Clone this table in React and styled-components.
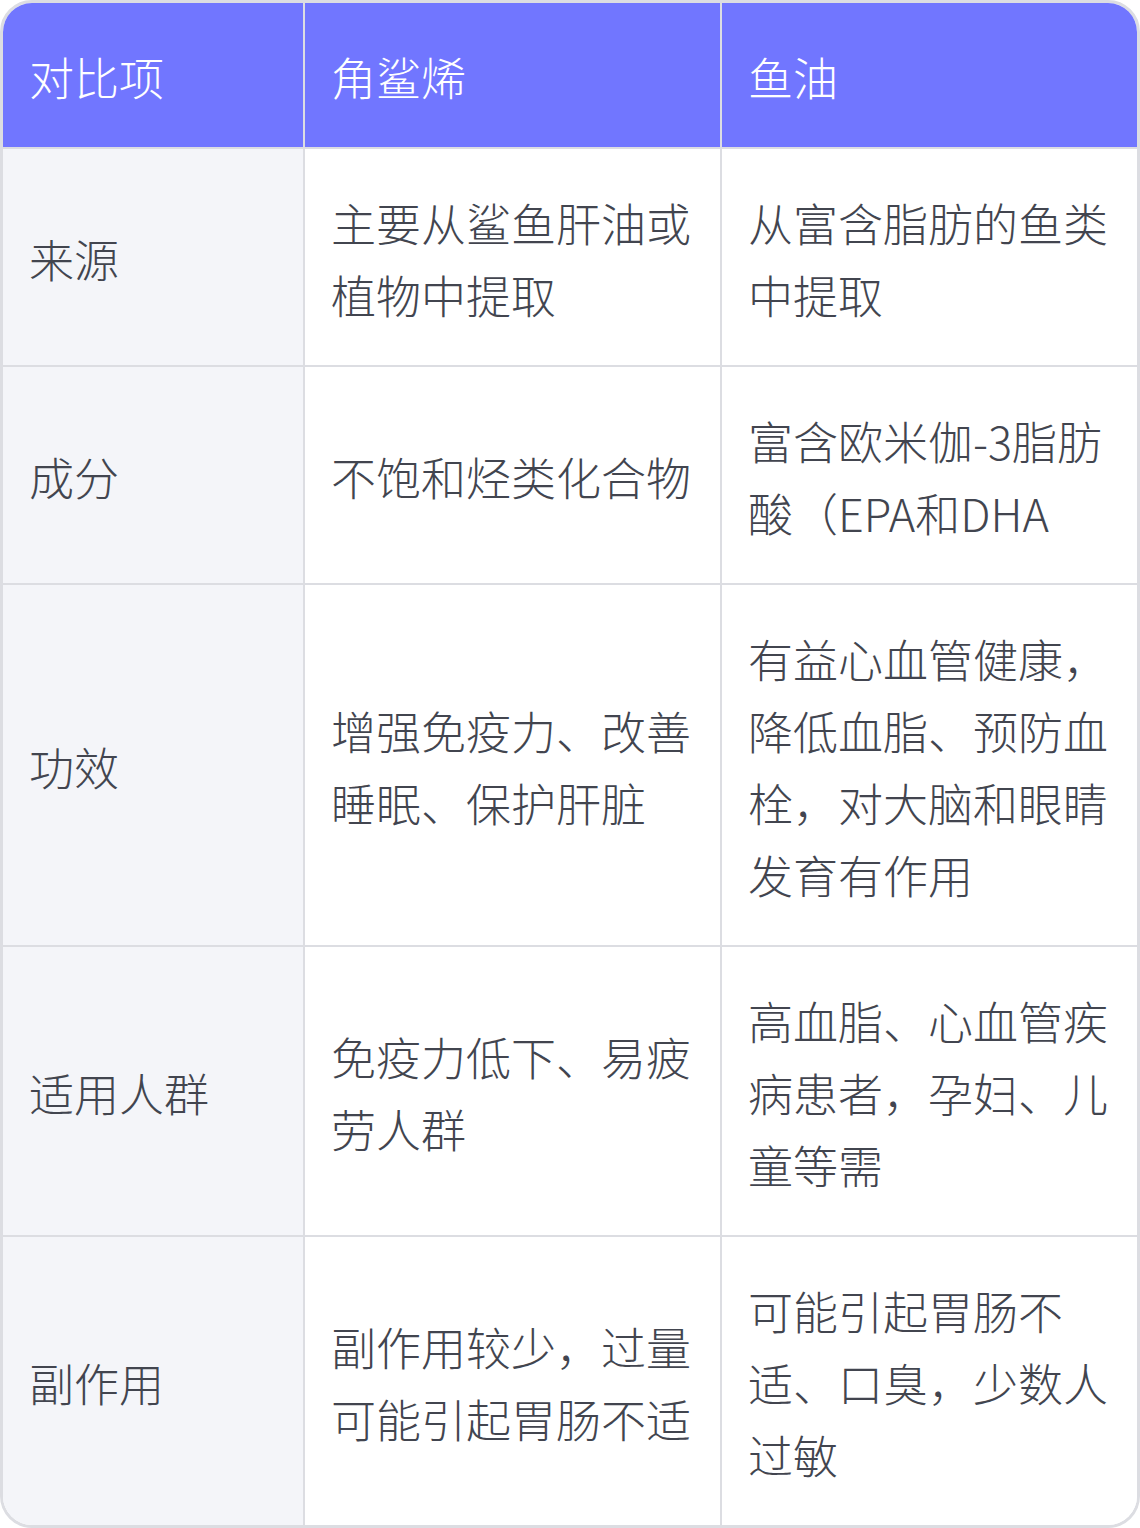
import React from 'react';
import styled, {createGlobalStyle} from 'styled-components';

const GlobalStyle = createGlobalStyle`
  html, body {
    margin: 0;
    padding: 0;
    background: #ffffff;
  }
`;

const Frame = styled.div`
  width: 1140px;
  box-sizing: border-box;
  border: 3px solid #dcdde2;
  border-radius: 32px;
  overflow: hidden;
  font-family: "Noto Sans CJK SC", "Noto Sans", sans-serif;
  font-weight: 300;
`;

const Table = styled.table`
  width: 1134px;
  table-layout: fixed;
  border-collapse: separate;
  border-spacing: 0;
`;

const HeadCell = styled.th`
  box-sizing: border-box;
  background: #7176ff;
  color: #ffffff;
  font-size: 45px;
  font-weight: 300;
  line-height: 72px;
  text-align: left;
  padding: 38px 10px 34px 26px;
  border-bottom: 2px solid #dcdde2;
  border-right: ${(props) => (props.last ? 'none' : '2px solid #dcdde2')};
`;

const Cell = styled.td`
  box-sizing: border-box;
  background: ${(props) => (props.label ? '#f4f5f9' : '#ffffff')};
  color: #42454f;
  font-size: 45px;
  line-height: 72px;
  padding: 38px 10px 34px 26px;
  vertical-align: middle;
  word-break: break-all;
  border-bottom: ${(props) => (props.bottom ? 'none' : '2px solid #dcdde2')};
  border-right: ${(props) => (props.last ? 'none' : '2px solid #dcdde2')};
`;

const rows = [
  ['来源', '主要从鲨鱼肝油或植物中提取', '从富含脂肪的鱼类中提取'],
  ['成分', '不饱和烃类化合物', '富含欧米伽-3脂肪酸（EPA和DHA'],
  ['功效', '增强免疫力、改善睡眠、保护肝脏', '有益心血管健康，降低血脂、预防血栓，对大脑和眼睛发育有作用'],
  ['适用人群', '免疫力低下、易疲劳人群', '高血脂、心血管疾病患者，孕妇、儿童等需'],
  ['副作用', '副作用较少，过量可能引起胃肠不适', '可能引起胃肠不适、口臭，少数人过敏'],
];

export default function App() {
  return (
    <>
      <GlobalStyle />
      <Frame>
        <Table>
          <colgroup>
            <col style={{width: 302}} />
            <col style={{width: 417}} />
            <col style={{width: 415}} />
          </colgroup>
          <thead>
            <tr>
              <HeadCell>对比项</HeadCell>
              <HeadCell>角鲨烯</HeadCell>
              <HeadCell last>鱼油</HeadCell>
            </tr>
          </thead>
          <tbody>
            {rows.map((row, i) => (
              <tr key={row[0]}>
                <Cell label bottom={i === rows.length - 1}>{row[0]}</Cell>
                <Cell bottom={i === rows.length - 1}>{row[1]}</Cell>
                <Cell last bottom={i === rows.length - 1}>{row[2]}</Cell>
              </tr>
            ))}
          </tbody>
        </Table>
      </Frame>
    </>
  );
}
